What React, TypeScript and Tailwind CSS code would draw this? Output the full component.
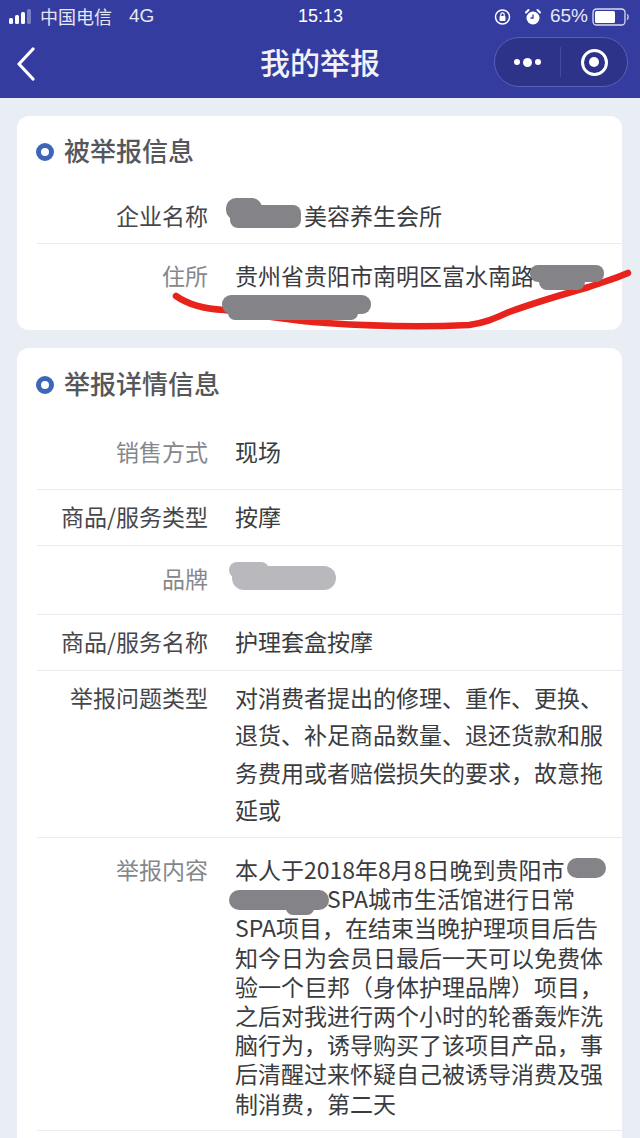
import React from 'react';

const font = { fontFamily: '"Noto Sans CJK SC", "Liberation Sans", sans-serif' };

const Row = ({ label, lines, h, lh, dim, divider = true }: { label: string; lines: string[]; h: string; lh: string; dim?: boolean; divider?: boolean }) => (
  <div className={`flex ${h} ${divider ? 'border-b border-[#e9ebee]' : ''}`}>
    <div className={`w-[171px] shrink-0 text-right text-[23px] whitespace-nowrap ${lh} ${dim ? 'text-[#85878b]' : 'text-[#45474b]'}`}>{label}</div>
    <div className={`ml-[27px] text-[23px] text-[#3a3c40] whitespace-nowrap ${lh}`}>
      {lines.map((l, i) => <div key={i}>{l}</div>)}
    </div>
  </div>
);

const CardTitle = ({ text, nudge }: { text: string; nudge: string }) => (
  <div className={`flex items-center gap-[10px] h-[36px] -ml-[1px] ${nudge}`}>
    <div className="w-[18px] h-[18px] rounded-full border-[5px] border-[#3d66b8] bg-white mt-[3px]" />
    <span className="text-[26px] font-medium text-[#55575b] leading-none whitespace-nowrap">{text}</span>
  </div>
);

export default function App() {
  return (
    <div className="relative w-[640px] h-[1138px] overflow-hidden bg-[#e9edf4]" style={font}>
      {/* header */}
      <div className="h-[98px] bg-[#353c9f] text-white">
        <div className="flex items-center h-[33px] px-[8px] relative">
          <svg width="24" height="20" viewBox="0 0 24 20" className="shrink-0">
            <rect x="1" y="11" width="4" height="6" rx="1.5" fill="#fff" />
            <rect x="7" y="8" width="4" height="9" rx="1.5" fill="#fff" />
            <rect x="13" y="5" width="4" height="12" rx="1.5" fill="#fff" />
            <rect x="19" y="2" width="4" height="15" rx="1.5" fill="#7a7fc4" />
          </svg>
          <span className="ml-[8px] text-[18px] text-[#e6e7f5] whitespace-nowrap">中国电信</span>
          <span className="ml-[17px] text-[19px] text-[#e6e7f5]" style={{ fontFamily: '"Liberation Sans", sans-serif' }}>4G</span>
          <span className="absolute left-[298px] text-[18px] font-medium" style={{ fontFamily: '"Liberation Sans", sans-serif' }}>15:13</span>
          <div className="ml-auto flex items-center">
            <svg width="20" height="20" viewBox="0 0 20 20">
              <circle cx="9.5" cy="10" r="7" fill="none" stroke="#fff" strokeWidth="1.5" />
              <rect x="6.5" y="9" width="6" height="5" rx="1" fill="#fff" />
              <path d="M7.8 9V7.5a1.7 1.7 0 0 1 3.4 0V9" fill="none" stroke="#fff" strokeWidth="1.2" />
            </svg>
            <svg width="20" height="20" viewBox="0 0 20 20" className="ml-[10px]">
              <circle cx="10" cy="11" r="6.5" fill="#fff" />
              <path d="M10 7.5V11H7.5" fill="none" stroke="#353c9f" strokeWidth="1.3" />
              <path d="M3 5.5 5.5 3M17 5.5 14.500 3" stroke="#fff" strokeWidth="2" strokeLinecap="round" />
            </svg>
            <span className="ml-[7px] text-[19px] text-[#e6e7f5]" style={{ fontFamily: '"Liberation Sans", sans-serif' }}>65%</span>
            <svg width="38" height="20" viewBox="0 0 38 20" className="ml-[4px] mr-[2px]">
              <rect x="1" y="2" width="32" height="16" rx="3.5" fill="none" stroke="#d9dbf0" strokeWidth="1.3" />
              <rect x="3" y="4" width="20" height="12" rx="1.5" fill="#fff" />
              <path d="M35 7.5c1.500.5 1.500 4.500 0 5" fill="none" stroke="#d9dbf0" strokeWidth="1.300" />
            </svg>
          </div>
        </div>
        <div className="relative flex items-center justify-center h-[61px]">
          <svg width="20" height="34" viewBox="0 0 20 34" className="absolute left-[16px] top-[14px]">
            <path d="M17 2 3 17l14 15" fill="none" stroke="#fff" strokeWidth="3.200" strokeLinecap="round" strokeLinejoin="round" />
          </svg>
          <span className="text-[30px] font-medium text-[#f2f3fa] leading-none pb-[5px]">我的举报</span>
          <div className="absolute left-[494px] top-[4px] w-[134px] h-[50px] rounded-full border border-[#5a60b4] bg-[#2d3389] flex items-center">
            <div className="flex-1 flex items-center justify-center gap-[3px]">
              <div className="w-[6px] h-[6px] rounded-full bg-white" />
              <div className="w-[9px] h-[9px] rounded-full bg-white" />
              <div className="w-[6px] h-[6px] rounded-full bg-white" />
            </div>
            <div className="w-px h-[30px] bg-[#444aa6]" />
            <div className="w-[66px] flex items-center justify-center">
              <div className="w-[27px] h-[27px] rounded-full border-[3.500px] border-white flex items-center justify-center">
                <div className="w-[10px] h-[10px] rounded-full bg-white" />
              </div>
            </div>
          </div>
        </div>
      </div>

      {/* cards */}
      <div className="flex flex-col gap-[18px] pt-[18px] pl-[17px] pr-[18px]">
        <div className="h-[214px] rounded-[12px] bg-white pl-[20px] pt-[18px]">
          <CardTitle text="被举报信息" nudge="-mt-[2px]" />
          <div className="mt-[10px]">
            <Row label="企业名称" lines={['　　　美容养生会所']} h="h-[66px]" lh="leading-[74px]" />
            <Row label="住所" lines={['贵州省贵阳市南明区富水南路']} h="h-[81px]" lh="leading-[63px]" dim divider={false} />
          </div>
        </div>

        <div className="rounded-[12px] rounded-b-none bg-white pl-[20px] pt-[18px] h-[800px]">
          <CardTitle text="举报详情信息" nudge="-mt-[1px]" />
          <div className="mt-[6px]">
            <Row label="销售方式" lines={['现场']} h="h-[83px]" lh="leading-[88px]" dim />
            <Row label="商品/服务类型" lines={['按摩']} h="h-[56px]" lh="leading-[52px]" />
            <Row label="品牌" lines={['']} h="h-[69px]" lh="leading-[64px]" dim />
            <Row label="商品/服务名称" lines={['护理套盒按摩']} h="h-[56px]" lh="leading-[52px]" />
            <div className="h-[167px] border-b border-[#e9ebee] pt-[8px] flex">
              <div className="w-[171px] shrink-0 text-right text-[23px] text-[#45474b] leading-[37px] whitespace-nowrap">举报问题类型</div>
              <div className="ml-[27px] text-[23px] text-[#3a3c40] leading-[37.300px] whitespace-nowrap">
                <div>对消费者提出的修理、重作、更换、</div>
                <div>退货、补足商品数量、退还货款和服</div>
                <div>务费用或者赔偿损失的要求，故意拖</div>
                <div>延或</div>
              </div>
            </div>
            <div className="h-[293px] border-b border-[#e9ebee] pt-[17px] flex">
              <div className="w-[171px] shrink-0 text-right text-[23px] text-[#85878b] leading-[29px] whitespace-nowrap">举报内容</div>
              <div className="ml-[27px] text-[23px] text-[#3a3c40] leading-[29.200px] whitespace-nowrap">
                <div>本人于2018年8月8日晚到贵阳市</div>
                <div>　　　　SPA城市生活馆进行日常</div>
                <div>SPA项目，在结束当晚护理项目后告</div>
                <div>知今日为会员日最后一天可以免费体</div>
                <div>验一个巨邦（身体护理品牌）项目，</div>
                <div>之后对我进行两个小时的轮番轰炸洗</div>
                <div>脑行为，诱导购买了该项目产品，事</div>
                <div>后清醒过来怀疑自己被诱导消费及强</div>
                <div>制消费，第二天</div>
              </div>
            </div>
          </div>
        </div>
      </div>

      {/* hand-drawn marks on top of the screenshot */}
      <svg width="640" height="1138" viewBox="0 0 640 1138" className="absolute left-0 top-0 pointer-events-none">
        <path d="M176 296c14 10 30 13 48 14 35 5 70 11 102 13 45 3 100 4 143 2 15-2 25-6 40-13 25-9 55-18 80-25 14-5 28-9 39-14" fill="none" stroke="#e8231c" strokeWidth="6.500" strokeLinecap="round" strokeLinejoin="round" />
        <g fill="#848488">
          <rect x="230" y="205" width="71" height="23" rx="8" />
          <rect x="226" y="198" width="36" height="22" rx="10" />
          <rect x="530" y="265" width="74" height="17" rx="8" />
          <rect x="539" y="272" width="46" height="18" rx="8" />
          <rect x="222" y="295" width="149" height="19" rx="9" />
          <rect x="228" y="305" width="130" height="15" rx="7" />
          <rect x="567" y="858" width="39" height="20" rx="10" />
          <rect x="229" y="890" width="100" height="20" rx="10" />
          <rect x="286" y="900" width="28" height="15" rx="7" />
        </g>
        <g fill="#b9b8bc">
          <rect x="232" y="566" width="104" height="24" rx="12" />
          <rect x="229" y="562" width="40" height="16" rx="8" />
        </g>
      </svg>
    </div>
  );
}
